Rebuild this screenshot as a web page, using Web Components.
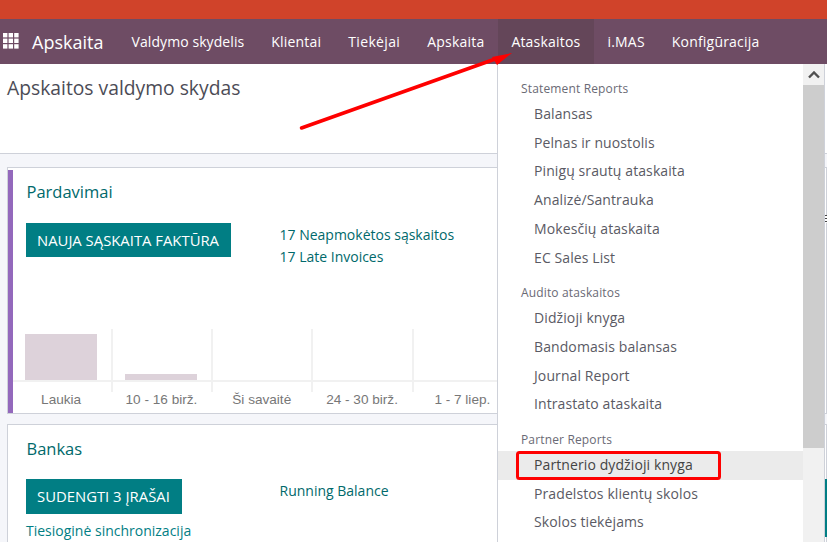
<!DOCTYPE html>
<html lang="en">
<head>
<meta charset="UTF-8">
<title>Apskaita</title>
<style>
  html,body{margin:0;height:100%;overflow:hidden;}
  body{background:#f5f6fa;font-family:"Open Sans","Noto Sans",sans-serif;font-size:14px;}
  .page{position:relative;width:827px;height:542px;overflow:hidden;}
</style>
</head>
<body>
<div class="page">
  <top-bar></top-bar>
  <app-nav>
    <nav-link style="letter-spacing:.08px">Valdymo skydelis</nav-link>
    <nav-link>Klientai</nav-link>
    <nav-link style="letter-spacing:.35px">Tiekėjai</nav-link>
    <nav-link>Apskaita</nav-link>
    <nav-link active>Ataskaitos</nav-link>
    <nav-link>i.MAS</nav-link>
    <nav-link>Konfigūracija</nav-link>
  </app-nav>
  <page-head>Apskaitos valdymo skydas</page-head>
  <dash-board>
    <dash-card title="Pardavimai" accent action="NAUJA SĄSKAITA FAKTŪRA" chart>
      <a-link>17 Neapmokėtos sąskaitos</a-link>
      <a-link>17 Late Invoices</a-link>
    </dash-card>
    <dash-card title="Bankas" action="SUDENGTI 3 ĮRAŠAI" note="Tiesioginė sinchronizacija">
      <a-link>Running Balance</a-link>
    </dash-card>
  </dash-board>
  <report-menu>
    <menu-head>Statement Reports</menu-head>
    <menu-item>Balansas</menu-item>
    <menu-item>Pelnas ir nuostolis</menu-item>
    <menu-item>Pinigų srautų ataskaita</menu-item>
    <menu-item>Analizė/Santrauka</menu-item>
    <menu-item>Mokesčių ataskaita</menu-item>
    <menu-item>EC Sales List</menu-item>
    <menu-head>Audito ataskaitos</menu-head>
    <menu-item>Didžioji knyga</menu-item>
    <menu-item>Bandomasis balansas</menu-item>
    <menu-item>Journal Report</menu-item>
    <menu-item>Intrastato ataskaita</menu-item>
    <menu-head>Partner Reports</menu-head>
    <menu-item hover>Partnerio dydžioji knyga</menu-item>
    <menu-item>Pradelstos klientų skolos</menu-item>
    <menu-item>Skolos tiekėjams</menu-item>
  </report-menu>
  <red-marks></red-marks>
</div>
<script>
  function shadow(el, html){
    el.attachShadow({mode:'open'}).innerHTML = html;
  }
  class TopBar extends HTMLElement{
    constructor(){
      super();
      shadow(this,`<style>:host{display:block;height:19px;background:#d0432a;}</style>`);
    }
  }
  class AppNav extends HTMLElement{
    constructor(){
      super();
      shadow(this,`<style>
        :host{display:flex;align-items:stretch;height:45px;background:#6e4c64;color:#fff;}
        svg{width:16px;height:16px;margin:14px 0 0 3px;flex:none;}
        .brand{font-size:18px;margin-left:13px;line-height:47px;width:86px;flex:none;}
      </style>
      <svg viewBox="0 0 16 16" fill="#fff">
        <rect width="4.4" height="4.4"/><rect x="5.6" width="4.4" height="4.4"/><rect x="11.2" width="4.4" height="4.4"/>
        <rect y="5.6" width="4.4" height="4.4"/><rect x="5.6" y="5.6" width="4.4" height="4.4"/><rect x="11.2" y="5.6" width="4.4" height="4.4"/>
        <rect y="11.2" width="4.4" height="4.4"/><rect x="5.6" y="11.2" width="4.4" height="4.4"/><rect x="11.2" y="11.2" width="4.4" height="4.4"/>
      </svg>
      <span class="brand">Apskaita</span>
      <slot></slot>`);
    }
  }
  class NavLink extends HTMLElement{
    constructor(){
      super();
      shadow(this,`<style>
        :host{display:block;padding:0 13.5px;line-height:45px;font-size:14px;letter-spacing:.2px;color:#fff;}
        :host([active]){background:#644659;}
      </style><slot></slot>`);
    }
  }
  class PageHead extends HTMLElement{
    constructor(){
      super();
      shadow(this,`<style>
        :host{display:block;height:90px;box-sizing:border-box;background:#fff;border-bottom:1px solid #ced1d9;padding:9px 7px;
          font-size:19.3px;line-height:30px;color:#4c4c56;}
      </style><slot></slot>`);
    }
  }
  class DashBoard extends HTMLElement{
    constructor(){
      super();
      shadow(this,`<style>
        :host{display:flex;flex-direction:column;gap:10px;padding:13px 0 0 7px;width:820px;}
      </style><slot></slot>`);
    }
  }
  class DashCard extends HTMLElement{
    constructor(){
      super();
      const days = [['Laukia',46],['10 - 16 birž.',6],['Ši savaitė',0],['24 - 30 birž.',0],['1 - 7 liep.',0]];
      const chart = this.hasAttribute('chart') ? `<div class="chart">${days.map(([t,h])=>
        `<div class="col"><div class="plot"><i style="height:${h}px"></i></div><div class="lab">${t}</div></div>`).join('')}</div>` : '';
      const note = this.getAttribute('note');
      shadow(this,`<style>
        :host{display:block;background:#fff;border:1px solid #ced1d9;box-sizing:border-box;position:relative;}
        :host([accent]){height:247px;}
        :host(:not([accent])){height:140px;}
        :host(:not([accent])) .row{padding-top:19px;}
        :host(:not([accent])) button{height:35px;line-height:35px;}
        :host(:not([accent])) .far{width:4px;height:58px;margin-top:0;background:#017e84;}
        .bar{display:none;position:absolute;z-index:1;left:0;top:2px;bottom:0;width:5px;background:#9368bc;}
        :host([accent]) .bar{display:block;}
        .title{font-size:16.5px;line-height:22px;color:#00696b;padding:13px 0 0 18.5px;}
        .row{display:flex;align-items:flex-start;padding:20px 0 0 18px;}
        .left{width:253.500px;flex:none;}
        button{display:block;border:0;background:#017e84;color:#fff;font:14.85px/34px "Open Sans","Noto Sans",sans-serif;padding:0 12px 0 11px;height:34px;white-space:nowrap;}
        .links{display:flex;flex-direction:column;margin-top:1px;width:545px;flex:none;}
        .far{flex:none;width:4px;height:8px;margin-top:-8px;
          background:repeating-linear-gradient(#444 0 1px,#fff 1px 3px);}
        .note{margin-top:7px;color:#017e84;font-size:14px;line-height:20px;white-space:nowrap;}
        .chart{position:absolute;left:3px;bottom:0;height:84px;display:flex;}
        .col{width:100.300px;flex:none;position:relative;}
        .col::after{content:"";position:absolute;right:-1.400px;top:0;width:2px;height:63px;background:#f1f1f1;}
        .plot{height:51px;display:flex;align-items:flex-end;justify-content:center;border-bottom:2px solid #f1f1f1;}
        .plot i{display:block;width:72px;background:#ddd2da;}
        .lab{font:13.6px/30px "Liberation Sans",sans-serif;color:#777;text-align:center;white-space:nowrap;margin-top:3px;}
      </style>
      <div class="bar"></div>
      <div class="title">${this.getAttribute('title')}</div>
      <div class="row">
        <div class="left"><button>${this.getAttribute('action')}</button>
        ${note ? `<div class="note">${note}</div>` : ''}</div>
        <div class="links"><slot></slot></div>
        <div class="far"></div>
      </div>${chart}`);
    }
  }
  class ALink extends HTMLElement{
    constructor(){
      super();
      shadow(this,`<style>:host{display:block;color:#00696b;font-size:14px;line-height:22px;white-space:nowrap;}</style><slot></slot>`);
    }
  }
  class ReportMenu extends HTMLElement{
    constructor(){
      super();
      shadow(this,`<style>
        :host{display:block;position:absolute;z-index:2;left:497px;top:64px;width:328px;height:478px;background:#fff;border-left:1px solid #ced1d9;border-right:1px solid #ced1d9;box-sizing:border-box;}
        .list{padding:14.600px 21px 0 0;}
        .scroll{position:absolute;right:0;top:0;bottom:0;width:21px;background:#f1f1f1;}
        .up{height:21px;display:flex;align-items:center;justify-content:center;}
        .thumb{height:363px;background:#cdcdcd;}
      </style>
      <div class="list"><slot></slot></div>
      <div class="scroll">
        <div class="up"><svg width="12" height="8" viewBox="0 0 12 8"><path d="M1 6.500 6 1.500l5 5" fill="none" stroke="#505050" stroke-width="2.400"/></svg></div>
        <div class="thumb"></div>
      </div>`);
    }
  }
  class MenuHead extends HTMLElement{
    constructor(){
      super();
      shadow(this,`<style>
        :host{display:block;padding:0 0 1.200px 23px;font-size:12px;letter-spacing:.15px;line-height:20px;color:#6a6a75;}
        :host(:not(:first-child)){margin-top:10.300px;}
      </style><slot></slot>`);
    }
  }
  class MenuItem extends HTMLElement{
    constructor(){
      super();
      shadow(this,`<style>
        :host{display:block;padding-left:36px;font-size:14px;letter-spacing:.1px;line-height:28.800px;height:28.800px;color:#5a5a64;}
        :host([hover]){background:#ebebeb;color:#444;}
      </style><slot></slot>`);
    }
  }
  class RedMarks extends HTMLElement{
    constructor(){
      super();
      shadow(this,`<style>
        :host{position:absolute;z-index:3;inset:0;display:block;pointer-events:none;}
        svg{position:absolute;left:0;top:0;}
      </style>
      <svg width="827" height="542">
        <path d="M301.500 128 L498 58" stroke="#fe0000" stroke-width="3.500" stroke-linecap="round"/>
        <path d="M512 53 L492 57 L497 65 Z" fill="#fe0000"/>
        <rect x="517.500" y="452.500" width="202" height="26" rx="2" fill="none" stroke="#fe0000" stroke-width="3"/>
      </svg>`);
    }
  }
  customElements.define('top-bar',TopBar);
  customElements.define('app-nav',AppNav);
  customElements.define('nav-link',NavLink);
  customElements.define('page-head',PageHead);
  customElements.define('dash-board',DashBoard);
  customElements.define('dash-card',DashCard);
  customElements.define('a-link',ALink);
  customElements.define('report-menu',ReportMenu);
  customElements.define('menu-head',MenuHead);
  customElements.define('menu-item',MenuItem);
  customElements.define('red-marks',RedMarks);
</script>
</body>
</html>
